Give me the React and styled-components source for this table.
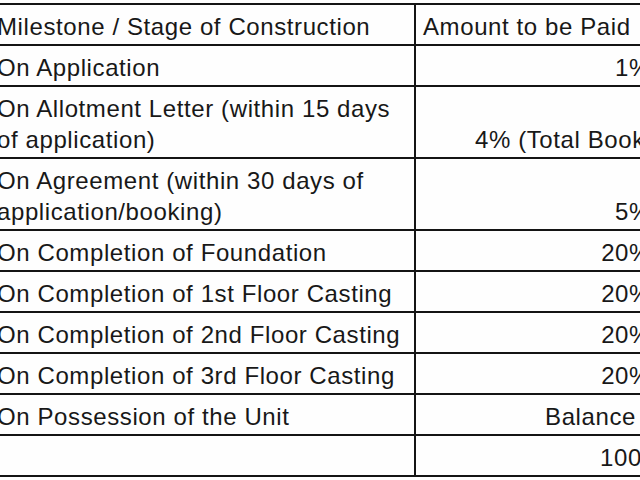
import React from 'react';
import styled, { createGlobalStyle } from 'styled-components';

const GlobalStyle = createGlobalStyle`
    html, body {
        margin: 0;
        padding: 0;
        background: #ffffff;
        overflow: hidden;
    }
    body {
        width: 640px;
        height: 480px;
        font-family: "Liberation Sans", Arial, sans-serif;
    }
`;

const Sheet = styled.div`
    width: 640px;
    height: 480px;
    overflow: hidden;
    background: #fefefe;
`;

const Table = styled.table`
    border-collapse: collapse;
    table-layout: fixed;
    width: 670px;
    margin: 3px 0 0 -12px;
    font-size: 24px;
    letter-spacing: 0.6px;
    color: #181818;
`;

const Cell = styled.td`
    border: 2px solid #141414;
    padding: 6px ${({ $padRight }) => $padRight ?? 7}px 2px ${({ $padLeft }) => $padLeft ?? 7}px;
    line-height: 31px;
    vertical-align: bottom;
    text-align: ${({ $align }) => $align || 'left'};
    white-space: ${({ $nowrap }) => ($nowrap ? 'nowrap' : 'normal')};
    overflow: hidden;
`;

const HeadCell = styled(Cell).attrs({ as: 'th' })`
    font-weight: normal;
`;

// indent: amounts that run past the sheet's right edge start at a fixed offset
const rows = [
    { stage: 'On Application', amount: '1%' },
    { stage: 'On Allotment Letter (within 15 days of application)', amount: '4% (Total Booking Amount)', indent: 59 },
    { stage: 'On Agreement (within 30 days of application/booking)', amount: '5%' },
    { stage: 'On Completion of Foundation', amount: '20%' },
    { stage: 'On Completion of 1st Floor Casting', amount: '20%' },
    { stage: 'On Completion of 2nd Floor Casting', amount: '20%' },
    { stage: 'On Completion of 3rd Floor Casting', amount: '20%' },
    { stage: 'On Possession of the Unit', amount: 'Balance', pad: 22 },
    { stage: '', amount: '100%', indent: 184 },
];

const App = () => {
    return (
        <>
            <GlobalStyle />
            <Sheet>
                <Table>
                    <colgroup>
                        <col style={{ width: 426 }} />
                        <col style={{ width: 244 }} />
                    </colgroup>
                    <thead>
                        <tr>
                            <HeadCell>Milestone / Stage of Construction</HeadCell>
                            <HeadCell $nowrap>Amount to be Paid</HeadCell>
                        </tr>
                    </thead>
                    <tbody>
                        {rows.map((row, i) => (
                            <tr key={i}>
                                <Cell>{row.stage || '\u00a0'}</Cell>
                                {row.indent ? (
                                    <Cell $nowrap $padLeft={row.indent}>{row.amount}</Cell>
                                ) : (
                                    <Cell $nowrap $align="right" $padRight={row.pad}>{row.amount}</Cell>
                                )}
                            </tr>
                        ))}
                    </tbody>
                </Table>
            </Sheet>
        </>
    );
};

export default App;
